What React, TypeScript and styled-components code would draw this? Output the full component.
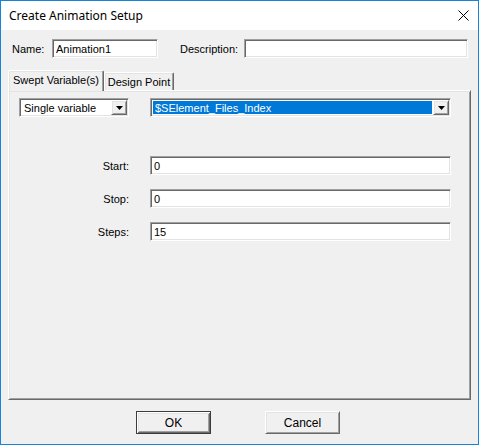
import { createGlobalStyle } from "styled-components";
import styled from "styled-components";

const GlobalStyle = createGlobalStyle`
  html, body {
    margin: 0;
    padding: 0;
    background: #f0f0f0;
  }
  * {
    box-sizing: border-box;
  }
`;

const Window = styled.div`
  width: 479px;
  height: 445px;
  border: 1px solid #1883d7;
  display: flex;
  flex-direction: column;
  background: #f0f0f0;
  font-family: "Liberation Sans", Arial, sans-serif;
  font-size: 11px;
  color: #000;
`;

const TitleBar = styled.div`
  height: 29px;
  background: #fff;
  display: flex;
  align-items: center;
  justify-content: space-between;
  padding: 0 9px 0 8px;
`;

const Title = styled.span`
  font-family: "Noto Sans", "Open Sans", sans-serif;
  font-size: 12px;
  padding-bottom: 1px;
`;

const Body = styled.div`
  flex: 1;
  padding: 0 7px;
  display: flex;
  flex-direction: column;
`;

const HeaderRow = styled.div`
  margin-top: 9px;
  height: 19px;
  display: flex;
  align-items: center;
`;

const Label = styled.span<{ $width: number; $left?: number; $align?: string }>`
  width: ${(p) => p.$width}px;
  margin-left: ${(p) => p.$left ?? 0}px;
  text-align: ${(p) => p.$align ?? "left"};
  flex-shrink: 0;
`;

const sunken = `
  border: 1px solid;
  border-color: #a0a0a0 #fff #fff #a0a0a0;
  box-shadow: inset 1px 1px 0 #696969, inset -1px -1px 0 #e3e3e3;
`;

const raised = `
  border: 1px solid;
  border-color: #fff #696969 #696969 #fff;
  box-shadow: inset 1px 1px 0 #e3e3e3, inset -1px -1px 0 #a0a0a0;
`;

const TextBox = styled.div<{ $width: number }>`
  ${sunken}
  width: ${(p) => p.$width}px;
  height: 19px;
  background: #fff;
  padding: 0 3px;
  display: flex;
  align-items: center;
  flex-shrink: 0;
`;

const TabStrip = styled.div`
  margin-top: 12px;
  height: 20px;
  display: flex;
  align-items: flex-end;
  position: relative;
  z-index: 1;
`;

const Tab = styled.div<{ $active?: boolean; $width: number }>`
  width: ${(p) => p.$width}px;
  height: ${(p) => (p.$active ? 21 : 18)}px;
  margin-bottom: ${(p) => (p.$active ? -1 : 0)}px;
  background: #f0f0f0;
  border: 1px solid;
  border-bottom: none;
  border-color: #fff #696969 transparent #fff;
  border-radius: 2px 2px 0 0;
  box-shadow: inset -1px 0 0 #a0a0a0, inset 1px 1px 0 #e3e3e3;
  display: flex;
  align-items: center;
  justify-content: center;
  padding-top: ${(p) => (p.$active ? 0 : 1)}px;
  padding-bottom: ${(p) => (p.$active ? 2 : 0)}px;
`;

const Panel = styled.div`
  ${raised}
  width: 463px;
  height: 310px;
  padding: 7px 10px;
  display: flex;
  flex-direction: column;
`;

const ComboRow = styled.div`
  display: flex;
  gap: 21px;
  height: 19px;
`;

const Combo = styled.div<{ $width: number }>`
  ${sunken}
  width: ${(p) => p.$width}px;
  height: 19px;
  background: #fff;
  display: flex;
  align-items: stretch;
  padding: 2px;
`;

const ComboText = styled.div<{ $selected?: boolean }>`
  flex: 1;
  display: flex;
  align-items: center;
  padding-left: 2px;
  margin-right: 1px;
  background: ${(p) => (p.$selected ? "#0078d7" : "transparent")};
  color: ${(p) => (p.$selected ? "#fff" : "#000")};
  white-space: nowrap;
  overflow: hidden;
`;

const ArrowButton = styled.div`
  ${raised}
  width: 16px;
  margin: -1px -1px -1px 0;
  background: #f0f0f0;
  display: flex;
  align-items: center;
  justify-content: center;
`;

const Fields = styled.div`
  margin-top: 39px;
  display: flex;
  flex-direction: column;
  gap: 14px;
`;

const FieldRow = styled.div`
  display: flex;
  align-items: center;
  height: 19px;
`;

const Footer = styled.div`
  margin-top: 11px;
  display: flex;
  gap: 54px;
  padding-left: 128px;
`;

const Button = styled.div<{ $default?: boolean }>`
  width: 75px;
  height: 23px;
  background: #f0f0f0;
  display: flex;
  align-items: center;
  justify-content: center;
  font-size: 12px;
  ${(p) =>
    p.$default
      ? `
    border: 1px solid #3c3c3c;
    box-shadow: inset 1px 1px 0 #fff, inset -1px -1px 0 #696969, inset 2px 2px 0 #e3e3e3, inset -2px -2px 0 #a0a0a0;
  `
      : raised}
`;

const DownArrow = () => (
  <svg width="7" height="4" viewBox="0 0 7 4">
    <path d="M0 0h7L3.5 4z" fill="#000" />
  </svg>
);

const CloseIcon = () => (
  <svg width="11" height="11" viewBox="0 0 11 11">
    <path d="M0.5 0.5L10.5 10.5M10.5 0.5L0.5 10.5" stroke="#000" strokeWidth="1" />
  </svg>
);

const fields = [
  { label: "Start:", value: "0" },
  { label: "Stop:", value: "0" },
  { label: "Steps:", value: "15" },
];

export default function App() {
  return (
    <>
      <GlobalStyle />
      <Window>
        <TitleBar>
          <Title>Create Animation Setup</Title>
          <CloseIcon />
        </TitleBar>
        <Body>
          <HeaderRow>
            <Label $width={40} $left={4}>
              Name:
            </Label>
            <TextBox $width={106}>Animation1</TextBox>
            <Label $width={64} $left={22}>
              Description:
            </Label>
            <TextBox $width={224} />
          </HeaderRow>
          <TabStrip>
            <Tab $active $width={96}>
              Swept Variable(s)
            </Tab>
            <Tab $width={70}>Design Point</Tab>
          </TabStrip>
          <Panel>
            <ComboRow>
              <Combo $width={110}>
                <ComboText>Single variable</ComboText>
                <ArrowButton>
                  <DownArrow />
                </ArrowButton>
              </Combo>
              <Combo $width={301}>
                <ComboText $selected>$SElement_Files_Index</ComboText>
                <ArrowButton>
                  <DownArrow />
                </ArrowButton>
              </Combo>
            </ComboRow>
            <Fields>
              {fields.map((f) => (
                <FieldRow key={f.label}>
                  <Label $width={110} $align="right">
                    {f.label}
                  </Label>
                  <Label $width={21} />
                  <TextBox $width={301}>{f.value}</TextBox>
                </FieldRow>
              ))}
            </Fields>
          </Panel>
          <Footer>
            <Button $default>OK</Button>
            <Button>Cancel</Button>
          </Footer>
        </Body>
      </Window>
    </>
  );
}
